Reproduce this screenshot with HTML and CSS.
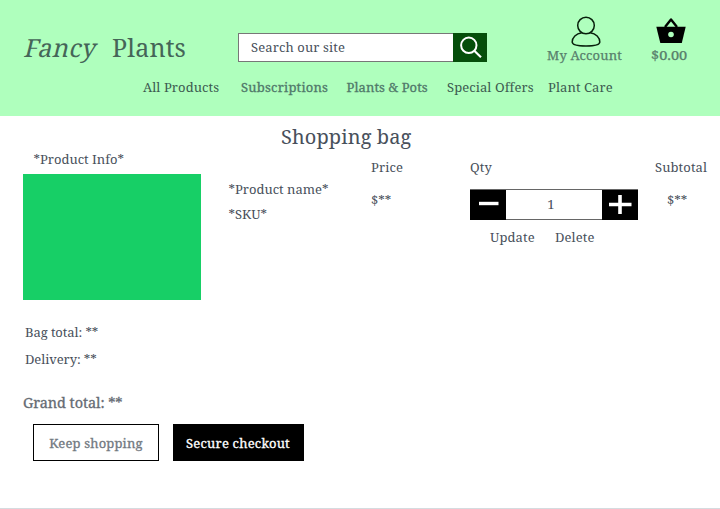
FILE: index.html
```html
<!DOCTYPE html>
<html lang="en">
<head>
<meta charset="utf-8">
<title>Fancy Plants - Shopping bag</title>
<link rel="stylesheet" href="styles.css">
</head>
<body>
<header class="header">
  <div class="topbar">
    <div class="brand"><em>Fancy</em><span>Plants</span></div>
    <div class="search">
      <span class="search-text">Search our site</span>
      <span class="search-button"><svg width="34" height="28" viewBox="0 0 34 28" fill="none" stroke="#fff"><circle cx="15.8" cy="12.3" r="7.7" stroke-width="2"/><path d="M21.3 17.8L28 24.3" stroke-width="2.2"/></svg></span>
    </div>
    <div class="account">
      <svg width="30" height="32" viewBox="0 0 30 32" fill="none" stroke="#071f0b" stroke-width="1.5"><circle cx="15" cy="9.5" r="8.3"/><path d="M10.8 16.7C5 17.5 1.2 21.5 1.2 26C1.2 28.8 6 30 15 30S28.8 28.8 28.8 26C28.8 21.5 25 17.5 19.2 16.7"/></svg>
      <span>My Account</span>
    </div>
    <div class="basket">
      <svg width="30" height="26" viewBox="0 0 30 26"><path d="M9 10L15 2.5L21 10" fill="none" stroke="#000" stroke-width="2.4" stroke-linejoin="round"/><path fill="#000" d="M.3 9.8H29.7L25.8 26H4.3Z"/><circle cx="15" cy="17.5" r="2.8" fill="#afffbd"/></svg>
      <span>$0.00</span>
    </div>
  </div>
  <nav class="nav">
    <a class="n1">All Products</a><a class="n2">Subscriptions</a><a class="n3">Plants &amp; Pots</a><a class="n4">Special Offers</a><a class="n5">Plant Care</a>
  </nav>
</header>
<main class="bag">
  <h1 class="title">Shopping bag</h1>
  <section class="item">
    <div class="col-info"><p class="info-label">*Product Info*</p><div class="photo"></div></div>
    <div class="col-name"><p class="name">*Product name*</p><p class="sku">*SKU*</p></div>
    <div class="col-price"><p class="head price-head">Price</p><p class="amount">$**</p></div>
    <div class="col-qty">
      <p class="head">Qty</p>
      <div class="stepper">
        <span class="step"><svg width="36" height="30" viewBox="0 0 36 30"><path d="M9 13.5H28.5" stroke="#fff" stroke-width="3.4"/></svg></span>
        <span class="count">1</span>
        <span class="step"><svg width="36" height="30" viewBox="0 0 36 30"><path d="M7 14.5H29.5M18 5V24" stroke="#fff" stroke-width="3.6"/></svg></span>
      </div>
      <div class="actions"><a class="update">Update</a><a class="delete">Delete</a></div>
    </div>
    <div class="col-sub"><p class="head sub-head">Subtotal</p><p class="amount sub-amount">$**</p></div>
  </section>
  <section class="totals">
    <p class="bag-total">Bag total: **</p>
    <p class="delivery">Delivery: **</p>
    <p class="grand">Grand total: **</p>
  </section>
  <div class="buttons"><a class="button keep"><span>Keep shopping</span></a><a class="button checkout"><span>Secure checkout</span></a></div>
</main>
</body>
</html>
```
FILE: styles.css
```css
* { box-sizing: border-box; }
body {
  margin: 0;
  height: 509px;
  overflow: hidden;
  background: #fff;
  color: #48505b;
  font: 13px/20px "Noto Serif", "Droid Serif", "DejaVu Serif Condensed", "DejaVu Serif", serif;
  white-space: nowrap;
}
p, h1 { margin: 0; font-weight: 400; }
svg { display: block; }
.header { height: 116px; background: #afffbd; color: #3c5a50; }
.topbar { display: flex; height: 77px; padding-left: 23px; }
.brand { display: flex; width: 215px; padding-top: 30px; font-size: 25px; line-height: 34px; color: #456558; }
.brand em { width: 91px; margin-left: -2px; font-style: normal; transform: skewX(-14deg); transform-origin: 0 75%; letter-spacing: .3px; }
.brand span { letter-spacing: .15px; }
.search { display: flex; width: 249px; height: 29px; margin-top: 33px; background: #fff; border: 1px solid #777; border-right: 0; color: #48505b; }
.search-text { width: 214px; padding-left: 12px; line-height: 27px; letter-spacing: .12px; }
.search-button { width: 34px; height: 29px; margin-top: -1px; background: #064e0b; }
.account { width: 98px; padding-top: 16px; margin-left: 49px; color: #58806c; -webkit-text-stroke: .25px #58806c; display: flex; flex-direction: column; align-items: center; }
.account svg { margin-left: 1px; }
.account span { margin: -3px 0 0 -1px; letter-spacing: .15px; }
.basket { width: 40px; margin-left: 16px; padding-top: 17px; color: #58806c; -webkit-text-stroke: .25px #58806c; display: flex; flex-direction: column; align-items: center; }
.basket svg { margin-left: 2px; }
.basket span { margin: 2px 0 0 -2px; transform: scaleX(1.12); }
.nav { display: flex; padding-left: 143px; letter-spacing: .08px; }
.n1 { width: 98px; }
.n2 { width: 105.5px; }
.n3 { width: 100.5px; }
.n4 { width: 101px; }
.n2, .n3 { color: #50796a; -webkit-text-stroke: .3px #50796a; }
.n2 { letter-spacing: .22px; }
.bag { height: 393px; border-bottom: 1px solid #d5dbdf; }
.title { height: 40px; padding: 6px 0 0 281px; font-size: 20px; line-height: 30px; letter-spacing: .1px; }
.item { display: flex; height: 166px; }
.col-info { width: 205.5px; padding-left: 22.5px; margin-top: -7px; }
.info-label { padding-left: 11px; height: 25px; }
.photo { width: 178px; height: 126px; background: #17cf66; }
.col-name { width: 165.5px; padding: 23px 0 0 23px; }
.name { margin-bottom: 5px; }
.col-price { width: 99px; }
.head { height: 33px; letter-spacing: .1px; }
.amount { padding-top: 1px; }
.col-qty { width: 185px; }
.stepper { display: flex; width: 168px; height: 31px; border: solid #666; border-width: 1px 0; }
.step { width: 36px; height: 30px; margin-top: -1px; background: #000; }
.step { margin-top: 0; }
.count { width: 96px; line-height: 29px; text-align: center; padding-right: 6px; }
.actions { display: flex; padding: 7px 0 0 20px; letter-spacing: .1px; }
.head { padding-top: 1px; }
.update { width: 65px; }
.sub-amount { padding-left: 12px; }
.totals { padding-left: 25px; }
.delivery { margin-top: 7px; }
.bag-total, .delivery { letter-spacing: -.08px; }
.grand { margin: 23px 0 0 -2px; font-size: 14.5px; letter-spacing: -.08px; color: #656b73; -webkit-text-stroke: .3px #656b73; }
.buttons { display: flex; gap: 13.5px; padding: 12px 0 0 33px; }
.button { display: block; height: 37px; line-height: 36px; text-align: center; border: 1px solid #000; letter-spacing: .16px; }
.keep { width: 126px; color: #727981; -webkit-text-stroke: .3px #727981; }
.checkout { width: 131px; background: #000; color: #fff; -webkit-text-stroke: .3px #fff; letter-spacing: .2px; }
```
